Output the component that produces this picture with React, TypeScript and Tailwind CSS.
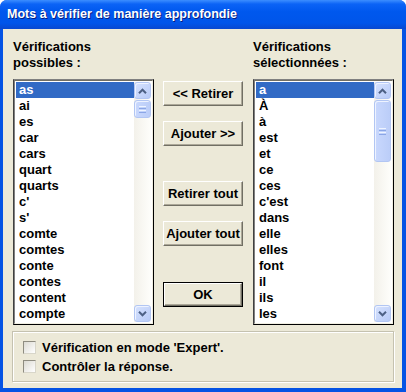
import React from "react";

const leftItems = ["as","ai","es","car","cars","quart","quarts","c'","s'","comte","comtes","conte","contes","content","compte"];
const rightItems = ["a","À","à","est","et","ce","ces","c'est","dans","elle","elles","font","il","ils","les"];

function Chevron({ up }: { up: boolean }) {
  return (
    <svg width="9" height="6" viewBox="0 0 9 6">
      <path d={up ? "M1 5.2 L4.5 1.7 L8 5.2" : "M1 0.8 L4.5 4.3 L8 0.8"} fill="none" stroke="#4D6185" strokeWidth="2" />
    </svg>
  );
}

function SBtn({ children }: { children?: React.ReactNode }) {
  return (
    <div className="w-[17px] h-[17px] rounded-[3px] border border-[#B2C6F3] bg-gradient-to-br from-[#D6E2FE] to-[#B8CBF7] shadow-[inset_1px_1px_0_#EEF3FF] flex items-center justify-center">
      {children}
    </div>
  );
}

function Grip() {
  return (
    <div className="flex flex-col gap-[1px]">
      <div className="w-[7px] h-[1px] bg-[#EEF4FF]" />
      <div className="w-[7px] h-[1px] bg-[#8BA6E6]" />
      <div className="w-[7px] h-[1px] bg-[#EEF4FF]" />
      <div className="w-[7px] h-[1px] bg-[#8BA6E6]" />
    </div>
  );
}

function ListBox({ items, thumbH }: { items: string[]; thumbH: string }) {
  return (
    <div className="w-[141px] h-[246px] border border-black border-t-[#808080] border-l-[#404040]">
      <div className="w-full h-full border border-t-[#716F64] border-l-[#808080] border-r-[#F1EFE2] border-b-[#F1EFE2] bg-white p-[1px] flex">
        <div className="flex-1 flex flex-col">
          {items.map((t, i) => (
            <div
              key={i}
              className={
                "h-[16px] leading-[16px] pl-[3px] text-[13px] font-bold " +
                (i === 0 ? "bg-[#316AC5] text-white" : "text-black")
              }
            >
              {t}
            </div>
          ))}
        </div>
        <div className="w-[17px] h-full flex flex-col bg-gradient-to-r from-[#F3F1EA] to-[#FEFEFB]">
          <SBtn><Chevron up /></SBtn>
          <div className={"w-[17px] mt-[1px] rounded-[3px] border border-[#B2C6F3] bg-gradient-to-r from-[#C9D8FD] to-[#BBCDF8] shadow-[inset_1px_1px_0_#EEF3FF] flex items-center justify-center " + thumbH}>
            <Grip />
          </div>
          <div className="flex-1" />
          <SBtn><Chevron up={false} /></SBtn>
        </div>
      </div>
    </div>
  );
}

function Btn({ label, def, className }: { label: string; def?: boolean; className?: string }) {
  const inner = (
    <div className="w-full h-full border-t border-l border-t-white border-l-white border-r border-b border-r-[#716F64] border-b-[#716F64] shadow-[inset_-1px_-1px_0_#ACA899] bg-[#ECE9D8] flex items-center justify-center text-[13px] font-bold text-black">
      {label}
    </div>
  );
  return (
    <div className={"w-[80px] h-[25px] " + (def ? "border border-black " : "") + (className ?? "")}>
      {inner}
    </div>
  );
}

function Check({ label }: { label: string }) {
  return (
    <div className="flex items-center h-[13px]">
      <div className="w-[13px] h-[13px] border border-[#8E8C80] border-r-[#D8D6CA] border-b-[#D8D6CA] bg-gradient-to-br from-[#DCDBD3] to-white" />
      <span className="ml-[6px] text-[13px] font-bold text-black leading-[13px]">{label}</span>
    </div>
  );
}

export default function App() {
  return (
    <div className="w-[406px] h-[392px] bg-white font-['Liberation_Sans',Arial,sans-serif]">
      <div className="w-[406px] h-[392px] rounded-t-[7px] bg-[#0553E4] flex flex-col overflow-hidden">
        <div className="h-[29px] shrink-0 bg-[linear-gradient(to_bottom,#3C8EFF_0%,#0B63F6_14%,#0058EE_40%,#0055EA_80%,#0848D0_100%)] flex items-center pl-[7px]">
          <span className="text-white font-bold text-[12.5px] [text-shadow:1px_1px_0_#0A1E80]">
            Mots à vérifier de manière approfondie
          </span>
        </div>
        <div className="flex-1 ml-[3px] mr-[4px] mb-[4px] bg-[#ECE9D8] pt-[10px] pl-[10px]">
          <div className="flex">
            <div className="flex flex-col w-[141px]">
              <div className="text-[13px] font-bold leading-[16px] h-[40px] text-black">
                Vérifications<br />possibles :
              </div>
              <ListBox items={leftItems} thumbH="h-[18px]" />
            </div>
            <div className="flex flex-col ml-[9px] pt-[42px]">
              <Btn label="<< Retirer" />
              <Btn label="Ajouter >>" className="mt-[15px]" />
              <Btn label="Retirer tout" className="mt-[35px]" />
              <Btn label="Ajouter tout" className="mt-[15px]" />
              <Btn label="OK" def className="mt-[36px]" />
            </div>
            <div className="flex flex-col w-[141px] ml-[10px]">
              <div className="text-[13px] font-bold leading-[16px] h-[40px] text-black">
                Vérifications<br />sélectionnées :
              </div>
              <ListBox items={rightItems} thumbH="h-[62px]" />
            </div>
          </div>
          <div className="mt-[6px] ml-[-1px] w-[382px] h-[51px] border border-[#C5C2B0] shadow-[inset_1px_1px_0_#fff,1px_1px_0_#fff] pl-[10px] pt-[9px] flex flex-col gap-[6px]">
            <Check label="Vérification en mode 'Expert'." />
            <Check label="Contrôler la réponse." />
          </div>
        </div>
      </div>
    </div>
  );
}
